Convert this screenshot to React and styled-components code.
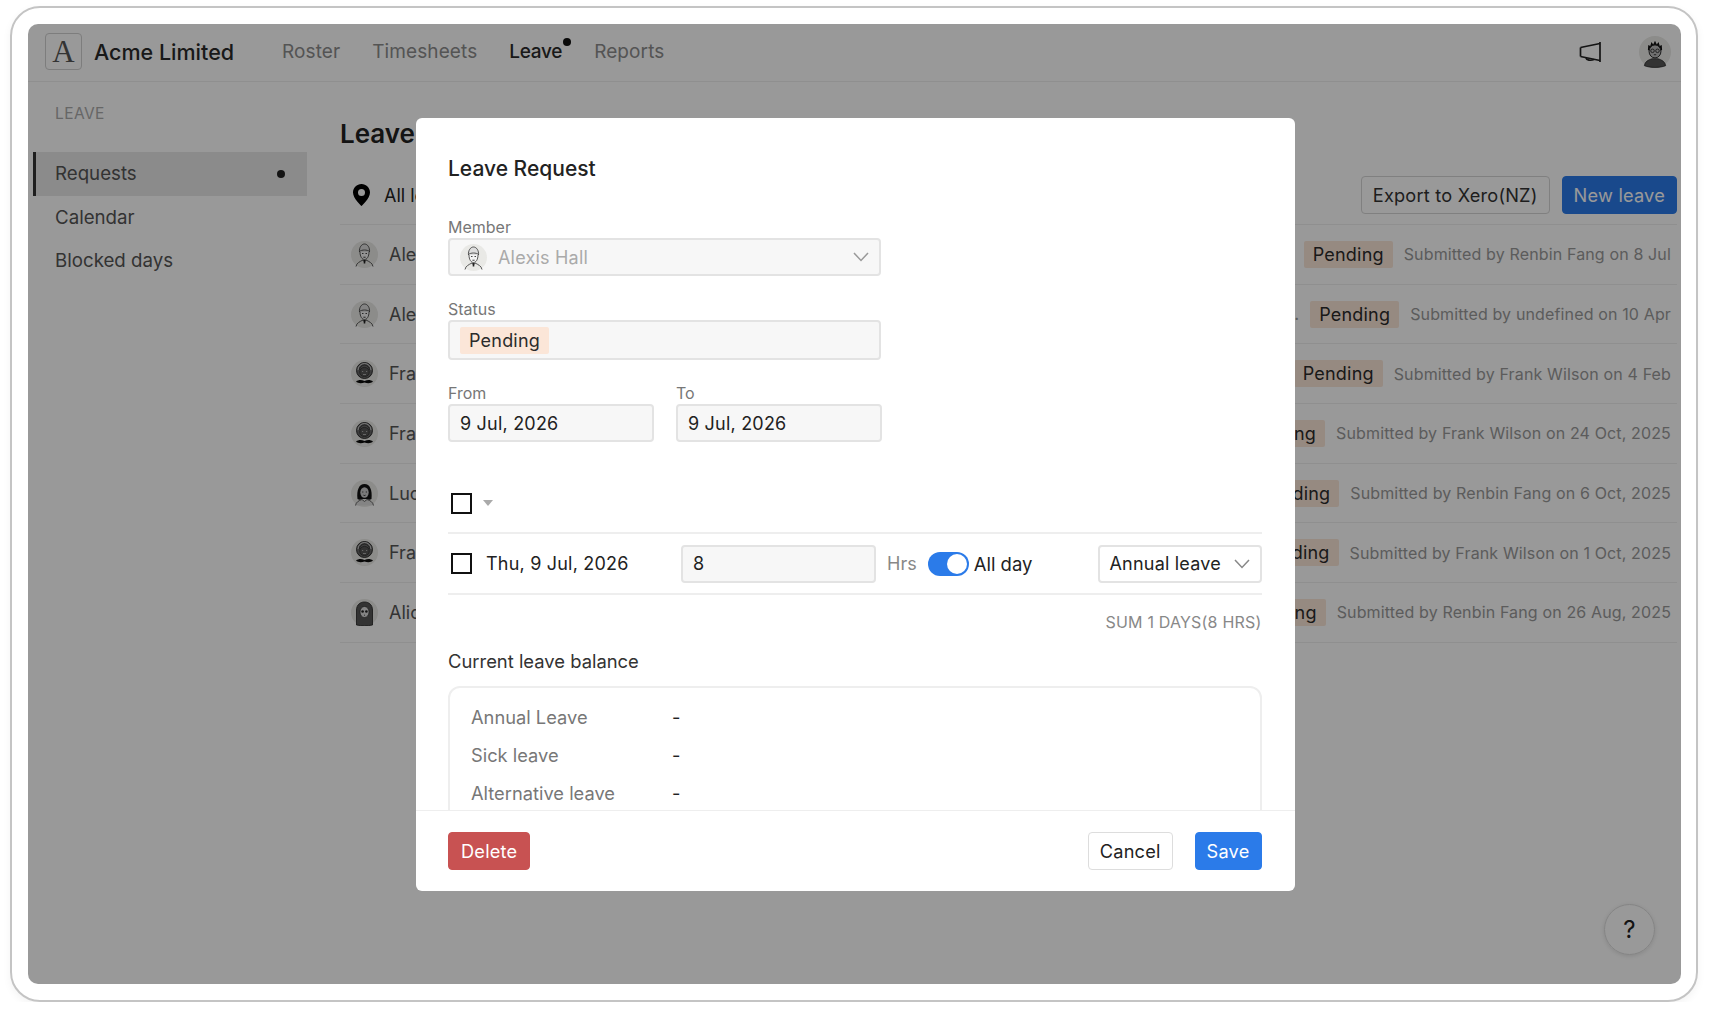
import React from 'react'
import styled, { createGlobalStyle } from 'styled-components'

const GlobalStyle = createGlobalStyle`
  html, body {
    margin: 0;
    padding: 0;
    background: #fff;
  }
  body {
    font-family: Inter, 'Noto Sans', 'Liberation Sans', sans-serif;
    color: #333;
  }
  * {
    box-sizing: border-box;
  }
`

const Frame = styled.div`
  width: 1688px;
  height: 996px;
  margin: 6px 0 0 10px;
  padding: 16px 15px 16px 16px;
  border: 2px solid #c4c4c4;
  border-radius: 30px;
  box-shadow: 0 3px 8px rgba(0, 0, 0, 0.05);
`

const AppWindow = styled.div`
  position: relative;
  height: 960px;
  border-radius: 10px;
  overflow: hidden;
  background: #fff;
`

const TopBar = styled.header`
  display: flex;
  align-items: center;
  height: 58px;
  padding: 0 10px 2px 17px;
  border-bottom: 1px solid #eee;
`

const LogoBox = styled.div`
  display: flex;
  align-items: center;
  justify-content: center;
  width: 37px;
  height: 37px;
  border: 1px solid #d0d0d0;
  border-radius: 4px;
  font-family: 'Liberation Serif', serif;
  font-size: 31px;
  line-height: 1;
  color: #555;
`

const Brand = styled.div`
  margin-left: 12px;
  width: 188px;
  font-size: 21.5px;
  font-weight: 500;
  color: #2b2b2b;
`

const Nav = styled.nav`
  display: flex;
  gap: 32px;
`

const NavItem = styled.a`
  position: relative;
  font-size: 19px;
  font-weight: ${p => (p.$active ? 500 : 400)};
  letter-spacing: ${p => (p.$active ? '-0.3px' : '0.1px')};
  color: ${p => (p.$active ? '#2b2b2b' : '#8c8c8c')};
`

const NavDot = styled.span`
  position: absolute;
  top: -2px;
  right: -9px;
  width: 8px;
  height: 8px;
  border-radius: 50%;
  background: #111;
`

const TopRight = styled.div`
  display: flex;
  align-items: center;
  gap: 38px;
  margin-left: auto;
`

const Layout = styled.div`
  display: flex;
`

const Sidebar = styled.aside`
  width: 312px;
  padding: 22px 0 0 5px;
`

const SideTitle = styled.div`
  padding-left: 22px;
  font-size: 15.5px;
  line-height: 20px;
  letter-spacing: 0.4px;
  color: #aaa;
`

const SideMenu = styled.div`
  margin-top: 28px;
`

const SideItem = styled.div`
  display: flex;
  align-items: center;
  justify-content: space-between;
  width: 274px;
  height: 43.5px;
  padding: 0 22px 0 19px;
  border-left: 3px solid ${p => (p.$active ? '#333' : 'transparent')};
  background: ${p => (p.$active ? '#e8e8e8' : 'transparent')};
  font-size: 18.7px;
  color: #555;
`

const SideDot = styled.span`
  width: 8px;
  height: 8px;
  border-radius: 50%;
  background: #222;
`

const Main = styled.main`
  width: 1337px;
  padding-top: 32px;
`

const Heading = styled.h1`
  margin: 0;
  font-size: 26px;
  font-weight: 600;
  line-height: 40px;
  color: #222;
`

const Toolbar = styled.div`
  display: flex;
  align-items: center;
  margin-top: 22px;
  padding-bottom: 10px;
  border-bottom: 1px solid #eee;
`

const Location = styled.div`
  display: flex;
  align-items: center;
  gap: 14px;
  padding-left: 13px;
  font-size: 18px;
  color: #222;
`

const ToolButtons = styled.div`
  display: flex;
  gap: 12px;
  margin-left: auto;
`

const Button = styled.button`
  height: 38px;
  padding: 0 ${p => p.$pad || 11}px;
  border: 1px solid ${p => p.$border || '#2b7be9'};
  border-radius: 4px;
  background: ${p => p.$bg || '#2b7be9'};
  color: ${p => p.$color || '#fff'};
  font-family: inherit;
  font-size: 18.2px;
  letter-spacing: 0.2px;
`

const LeaveRow = styled.div`
  display: flex;
  align-items: center;
  height: 59.7px;
  padding: 0 6px 0 11px;
  border-bottom: 1px solid #eee;
`

const RowName = styled.div`
  margin-left: 11px;
  font-size: 18px;
  color: #555;
`

const RowNote = styled.div`
  margin-left: auto;
  margin-right: 11px;
  font-size: 17px;
  color: #999;
`

const Tag = styled.span`
  display: inline-flex;
  align-items: center;
  height: 27px;
  padding: 0 9px;
  border-radius: 2px;
  background: #fbe6d8;
  font-size: 18px;
  letter-spacing: 0.2px;
  color: #2b2b2b;
`

const PushedTag = styled(Tag)`
  margin-left: ${p => (p.$noted ? '0' : 'auto')};
`

const Submitted = styled.div`
  margin-left: 11px;
  font-size: 16px;
  letter-spacing: 0.14px;
  color: #999;
`

const HelpButton = styled.div`
  position: absolute;
  right: 26px;
  bottom: 29px;
  display: flex;
  align-items: center;
  justify-content: center;
  width: 51px;
  height: 51px;
  border: 1px solid #ddd;
  border-radius: 50%;
  box-shadow: 0 1px 4px rgba(0, 0, 0, 0.12);
  font-size: 24px;
  color: #222;
`

const Overlay = styled.div`
  position: absolute;
  inset: 0;
  display: flex;
  justify-content: center;
  align-items: flex-start;
  padding: 94px 0 0 1px;
  background: rgba(0, 0, 0, 0.4);
`

const Modal = styled.div`
  display: flex;
  flex-direction: column;
  width: 879px;
  height: 773px;
  border-radius: 6px;
  background: #fff;
  overflow: hidden;
`

const ModalBody = styled.div`
  flex: 1;
  min-height: 0;
  padding: 34px 33px 0 32.5px;
  overflow: hidden;
`

const ModalTitle = styled.h2`
  margin: 0 0 31px;
  font-size: 21px;
  font-weight: 500;
  line-height: 34px;
  color: #222;
`

const Field = styled.div`
  width: 433px;
  margin-bottom: 23px;
`

const Label = styled.div`
  height: 21px;
  font-size: 16px;
  line-height: 20px;
  color: #777;
`

const InputBox = styled.div`
  display: flex;
  align-items: center;
  height: ${p => p.$height || 38}px;
  padding: 0 10px;
  border: 2px solid #e3e3e3;
  border-radius: 4px;
  background: ${p => p.$bg || '#f7f7f7'};
  font-size: 18px;
  letter-spacing: 0.2px;
  color: ${p => p.$color || '#222'};
`

const MemberName = styled.span`
  margin-left: 11px;
`

const Chevron = styled.svg`
  margin-left: auto;
  flex: none;
`

const DateRow = styled.div`
  display: grid;
  grid-template-columns: 206px 206px;
  gap: 22px;
`

const DayHead = styled.div`
  display: flex;
  align-items: center;
  gap: 11px;
  height: 60px;
  margin-top: 32px;
  padding-left: 3px;
  border-bottom: 2px solid #eee;
`

const Check = styled.span`
  flex: none;
  width: 21px;
  height: 21px;
  border: 2px solid #111;
  background: #fff;
`

const Caret = styled.span`
  width: 0;
  height: 0;
  border-left: 5.5px solid transparent;
  border-right: 5.5px solid transparent;
  border-top: 6px solid #aaa;
`

const DayRow = styled.div`
  display: flex;
  align-items: center;
  height: 61px;
  padding-left: 3px;
  border-bottom: 2px solid #eee;
`

const DayDate = styled.div`
  width: 195px;
  margin-left: 14px;
  font-size: 18px;
  letter-spacing: 0.2px;
  color: #222;
`

const HoursInput = styled(InputBox)`
  width: 195px;
`

const Muted = styled.span`
  margin-left: 11px;
  font-size: 18px;
  color: #888;
`

const Toggle = styled.span`
  display: flex;
  justify-content: flex-end;
  align-items: center;
  width: 41px;
  height: 24px;
  margin-left: 11px;
  padding-right: 2px;
  border-radius: 12px;
  background: #2b7be9;
`

const ToggleKnob = styled.span`
  width: 20px;
  height: 20px;
  border-radius: 50%;
  background: #fff;
`

const AllDay = styled.span`
  margin-left: 5px;
  font-size: 18.5px;
  color: #222;
`

const TypeSelect = styled(InputBox)`
  width: 164px;
  margin-left: auto;
`

const Sum = styled.div`
  margin-top: 17px;
  text-align: right;
  font-size: 16px;
  line-height: 20px;
  letter-spacing: 0.2px;
  color: #888;
`

const BalanceTitle = styled.div`
  margin-top: 19px;
  font-size: 18.4px;
  line-height: 20px;
  color: #333;
`

const BalanceCard = styled.div`
  margin-top: 15px;
  height: 160px;
  padding: 10px 21px;
  border: 2px solid #eee;
  border-radius: 12px;
`

const BalanceRow = styled.div`
  display: flex;
  align-items: center;
  height: 38px;
  font-size: 18.3px;
  color: #777;
`

const BalanceName = styled.span`
  width: 201px;
`

const BalanceValue = styled.span`
  color: #222;
`

const ModalFooter = styled.div`
  display: flex;
  align-items: center;
  height: 81px;
  padding: 0 33px 0 32.5px;
  border-top: 1px solid #eee;
`

const FooterRight = styled.div`
  display: flex;
  gap: 22px;
  margin-left: auto;
`

const rows = [
  { face: 'alexis', name: 'Alexis Hall', by: 'Renbin Fang', on: '8 Jul' },
  { face: 'alexis', name: 'Alexis Hall', by: 'undefined', on: '10 Apr', note: '..' },
  { face: 'frank', name: 'Frank Wilson', by: 'Frank Wilson', on: '4 Feb' },
  { face: 'frank', name: 'Frank Wilson', by: 'Frank Wilson', on: '24 Oct, 2025' },
  { face: 'lucy', name: 'Lucy Davis', by: 'Renbin Fang', on: '6 Oct, 2025' },
  { face: 'frank', name: 'Frank Wilson', by: 'Frank Wilson', on: '1 Oct, 2025' },
  { face: 'alice', name: 'Alice Moore', by: 'Renbin Fang', on: '26 Aug, 2025' },
]

const balances = ['Annual Leave', 'Sick leave', 'Alternative leave']

// little line drawings for the member pictures
const faces = {
  alexis: (
    <g fill="none" stroke="#444" strokeWidth="0.9">
      <path d="M8.500 11c-.5-4.500 2-8 5-8s5.500 3.500 5 8" fill="#ddd" />
      <path d="M8 10.500c3.500-2 7.500-2 11 0" />
      <path d="M9 11c0 4.500 2 7.500 4.500 7.500s4.500-3 4.500-7.500" fill="#f4f4f4" />
      <path d="M11 12.500h1.500M14.500 12.500H16M12.500 15.800c.7.600 1.300.600 2 0" strokeWidth="1.100" />
      <path d="M5 25.500c.5-3.500 4-5 7-6.500l1.500 2 1.500-2c3 1.500 6.500 3 7 6.500" />
      <path d="M13.500 19v3.500" stroke="#222" strokeWidth="1.600" />
    </g>
  ),
  frank: (
    <g>
      <circle cx="13.500" cy="10.500" r="8" fill="#666" stroke="#222" strokeWidth="0.9" />
      <path d="M7 10a6.500 6.500 0 0 1 13 0" fill="none" stroke="#ddd" strokeWidth="0.9" />
      <path d="M8.500 10a5 5 0 0 1 10 0" fill="none" stroke="#222" strokeWidth="0.7" />
      <ellipse cx="13.500" cy="12" rx="4.800" ry="4.600" fill="#555" stroke="#222" strokeWidth="0.6" />
      <path d="M11 11.500h1.200M15 11.500h1.200M12 14.500h3" stroke="#ccc" strokeWidth="0.7" />
      <rect x="10.500" y="20" width="6" height="6" fill="#eee" />
      <path d="M5 21.500c2.500-2 5.500-2 8.500-.5 3-1.500 6-1.500 8.500.5-2 2-5.500 2-8.500 1-3 1-6.500 1-8.500-1z" fill="#0c0c0c" />
    </g>
  ),
  lucy: (
    <g>
      <path d="M6.500 19c-1-9 1.500-15 7-15s8 6 7 15c-1.500 1-3 1-4.500 0h-5c-1.500 1-3 1-4.500 0z" fill="#111" />
      <ellipse cx="13.500" cy="12.500" rx="4.200" ry="5.200" fill="#ccc" />
      <path d="M11.300 12h1M14.800 12h1M12.500 15.200c.7.400 1.300.400 2 0" stroke="#111" strokeWidth="0.9" fill="none" />
      <path d="M4.500 25.500c.5-3.500 3.500-5 6.500-6l2.500 2 2.500-2c3 1 6 2.500 6.500 6" fill="#ddd" stroke="#444" strokeWidth="0.8" />
    </g>
  ),
  alice: (
    <g>
      <path d="M5.500 26V11c0-5 3.500-8 8-8s8 3 8 8v15c-4 1-12 1-16 0z" fill="#555" stroke="#222" strokeWidth="0.8" />
      <ellipse cx="13.500" cy="13" rx="4.500" ry="5.500" fill="#ddd" stroke="#222" strokeWidth="0.6" />
      <circle cx="11.600" cy="12.500" r="1.300" fill="#222" />
      <circle cx="15.400" cy="12.500" r="1.300" fill="#222" />
      <path d="M13 16.200h1" stroke="#222" strokeWidth="0.8" />
    </g>
  ),
  user: (
    <g>
      <path d="M7.500 12L7.800 7.500 9.500 8.500l1-3.500 1.500 2.200L13.500 4l1.500 3.200L16.500 5l1 3.500 1.700-1 .3 4.500z" fill="#111" />
      <ellipse cx="13.500" cy="13" rx="5" ry="5.500" fill="#bbb" stroke="#222" strokeWidth="0.8" />
      <circle cx="11.400" cy="12.500" r="1.500" fill="none" stroke="#222" strokeWidth="0.7" />
      <circle cx="15.600" cy="12.500" r="1.500" fill="none" stroke="#222" strokeWidth="0.7" />
      <path d="M12.500 15.800h2" stroke="#222" strokeWidth="0.7" />
      <path d="M4.500 25c.5-3.500 3.500-5 6.500-5.800h5c3 .8 6 2.300 6.500 5.800-4.500 2-13.500 2-18 0z" fill="#555" stroke="#222" strokeWidth="0.6" />
    </g>
  ),
}

function Avatar({ face, size = 27 }) {
  return (
    <svg width={size} height={size} viewBox="0 0 27 27" style={{ flex: 'none' }}>
      <circle cx="13.5" cy="13.5" r="13.5" fill="#e9e9e6" />
      {faces[face]}
    </svg>
  )
}

function Megaphone() {
  return (
    <svg width="22" height="22" viewBox="0 0 22 22" fill="none" stroke="#222" strokeWidth="1.7">
      <path d="M21 1v20M1.500 6.500v9" />
      <path d="M1.500 6.500L21 2.500M1.500 15.500L21 19.500" />
      <path d="M7 17c.5 2 4.500 3 8 1.500" />
    </svg>
  )
}

function Pin() {
  return (
    <svg width="17" height="22" viewBox="0 0 17 22">
      <path
        fillRule="evenodd"
        fill="#000"
        d="M8.500 0C3.800 0 0 3.800 0 8.500 0 14.500 8.500 22 8.500 22S17 14.500 17 8.500C17 3.800 13.200 0 8.500 0zm0 5a3.500 3.500 0 1 1 0 7 3.500 3.500 0 0 1 0-7z"
      />
    </svg>
  )
}

function Down({ color }) {
  return (
    <Chevron width="16" height="10" viewBox="0 0 16 10" fill="none" stroke={color} strokeWidth="1.5">
      <path d="M1 1l7 7.500L15 1" />
    </Chevron>
  )
}

export default function App() {
  return (
    <>
      <GlobalStyle />
      <Frame>
        <AppWindow>
          <TopBar>
            <LogoBox>A</LogoBox>
            <Brand>Acme Limited</Brand>
            <Nav>
              <NavItem>Roster</NavItem>
              <NavItem>Timesheets</NavItem>
              <NavItem $active>Leave<NavDot /></NavItem>
              <NavItem>Reports</NavItem>
            </Nav>
            <TopRight>
              <Megaphone />
              <Avatar face="user" size={32} />
            </TopRight>
          </TopBar>

          <Layout>
            <Sidebar>
              <SideTitle>LEAVE</SideTitle>
              <SideMenu>
                <SideItem $active>Requests<SideDot /></SideItem>
                <SideItem>Calendar</SideItem>
                <SideItem>Blocked days</SideItem>
              </SideMenu>
            </Sidebar>

            <Main>
              <Heading>Leave requests</Heading>
              <Toolbar>
                <Location><Pin />All locations</Location>
                <ToolButtons>
                  <Button $bg="#fff" $border="#d5d5d5" $color="#333">Export to Xero(NZ)</Button>
                  <Button>New leave</Button>
                </ToolButtons>
              </Toolbar>
              {rows.map((row, i) => (
                <LeaveRow key={i}>
                  <Avatar face={row.face} />
                  <RowName>{row.name}</RowName>
                  {row.note && <RowNote>{row.note}</RowNote>}
                  <PushedTag $noted={!!row.note}>Pending</PushedTag>
                  <Submitted>Submitted by {row.by} on {row.on}</Submitted>
                </LeaveRow>
              ))}
            </Main>
          </Layout>

          <HelpButton>?</HelpButton>

          <Overlay>
            <Modal>
              <ModalBody>
                <ModalTitle>Leave Request</ModalTitle>

                <Field>
                  <Label>Member</Label>
                  <InputBox $color="#aaa">
                    <Avatar face="alexis" />
                    <MemberName>Alexis Hall</MemberName>
                    <Down color="#999" />
                  </InputBox>
                </Field>

                <Field>
                  <Label>Status</Label>
                  <InputBox $height={40}>
                    <Tag>Pending</Tag>
                  </InputBox>
                </Field>

                <DateRow>
                  <div>
                    <Label>From</Label>
                    <InputBox>9 Jul, 2026</InputBox>
                  </div>
                  <div>
                    <Label>To</Label>
                    <InputBox>9 Jul, 2026</InputBox>
                  </div>
                </DateRow>

                <DayHead>
                  <Check />
                  <Caret />
                </DayHead>

                <DayRow>
                  <Check />
                  <DayDate>Thu, 9 Jul, 2026</DayDate>
                  <HoursInput>8</HoursInput>
                  <Muted>Hrs</Muted>
                  <Toggle><ToggleKnob /></Toggle>
                  <AllDay>All day</AllDay>
                  <TypeSelect $bg="#fff">
                    Annual leave
                    <Down color="#888" />
                  </TypeSelect>
                </DayRow>

                <Sum>SUM 1 DAYS(8 HRS)</Sum>
                <BalanceTitle>Current leave balance</BalanceTitle>
                <BalanceCard>
                  {balances.map(name => (
                    <BalanceRow key={name}>
                      <BalanceName>{name}</BalanceName>
                      <BalanceValue>-</BalanceValue>
                    </BalanceRow>
                  ))}
                </BalanceCard>
              </ModalBody>

              <ModalFooter>
                <Button $bg="#c85252" $border="#c85252" $pad={12}>Delete</Button>
                <FooterRight>
                  <Button $bg="#fff" $border="#ddd" $color="#222">Cancel</Button>
                  <Button>Save</Button>
                </FooterRight>
              </ModalFooter>
            </Modal>
          </Overlay>
        </AppWindow>
      </Frame>
    </>
  )
}
